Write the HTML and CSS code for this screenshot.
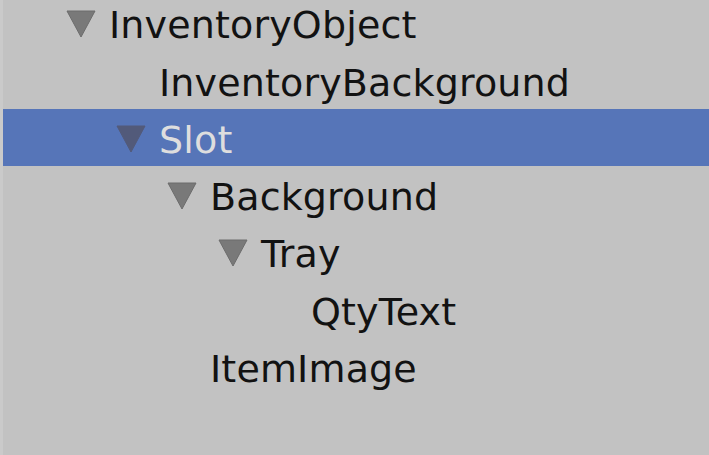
FILE: index.html
```html
<!DOCTYPE html>
<html>
<head>
<meta charset="utf-8">
<link rel="stylesheet" href="styles.css">
</head>
<body>
<ul class="tree">
  <li class="row l0"><svg class="arrow" viewBox="0 0 30 28"><polygon points="1,1 29,1 15,27"/></svg><span class="label">InventoryObject</span></li>
  <li class="row l1"><span class="spacer"></span><span class="label">InventoryBackground</span></li>
  <li class="row l1 selected"><svg class="arrow" viewBox="0 0 30 28"><polygon points="1,1 29,1 15,27"/></svg><span class="label">Slot</span></li>
  <li class="row l2"><svg class="arrow" viewBox="0 0 30 28"><polygon points="1,1 29,1 15,27"/></svg><span class="label">Background</span></li>
  <li class="row l3"><svg class="arrow" viewBox="0 0 30 28"><polygon points="1,1 29,1 15,27"/></svg><span class="label">Tray</span></li>
  <li class="row l4"><span class="spacer"></span><span class="label">QtyText</span></li>
  <li class="row l2"><span class="spacer"></span><span class="label">ItemImage</span></li>
</ul>
</body>
</html>
```
FILE: styles.css
```css
html, body {
  margin: 0;
  padding: 0;
  height: 100%;
  background: #c2c2c2;
  overflow: hidden;
}
body {
  border-left: 3px solid #cacaca;
}
.tree {
  list-style: none;
  margin: -6px 0 0 0;
  padding: 0;
}
.row {
  height: 57.5px;
  box-sizing: border-box;
  padding-top: 6px;
  line-height: 51px;
  font-family: "DejaVu Sans", sans-serif;
  font-size: 38px;
  color: #121212;
  white-space: nowrap;
}
.row:nth-child(3) {
  height: 56.5px;
}
.l0 { padding-left: 63px; }
.l1 { padding-left: 113px; }
.l2 { padding-left: 164px; }
.l3 { padding-left: 215px; }
.l4 { padding-left: 265px; }
.arrow, .spacer {
  display: inline-block;
  width: 30px;
  height: 28px;
  margin-right: 13px;
  vertical-align: baseline;
}
.label {
  letter-spacing: 0.15px;
}
.arrow polygon {
  fill: #797979;
  stroke: #6c6c6c;
  stroke-width: 1;
  stroke-linejoin: round;
}
.selected {
  background: #5675b8;
  color: #dedede;
}
.selected .arrow polygon {
  fill: #525a7a;
  stroke: #525a7a;
}
```
